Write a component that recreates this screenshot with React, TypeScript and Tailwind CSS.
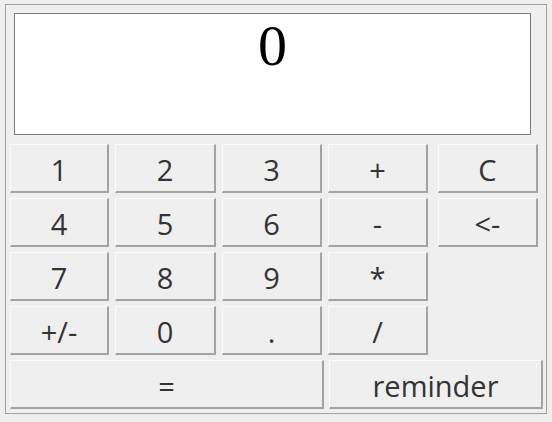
import type { ReactNode } from 'react'

const keyBase =
  'flex h-[49px] items-center justify-center border-t border-l border-t-[#fbfbfb] border-l-[#fbfbfb] border-r-2 border-b-2 border-r-[#a3a3a3] border-b-[#a3a3a3] bg-[#efefef] pt-[2px] text-[29px] leading-none text-[#333333]'

function Key({ children, className = '' }: { children: ReactNode; className?: string }) {
  return <button className={`${keyBase} ${className}`}>{children}</button>
}

const rows: (string | null)[][] = [
  ['1', '2', '3', '+', 'C'],
  ['4', '5', '6', '-', '<-'],
  ['7', '8', '9', '*', null],
  ['+/-', '0', '.', '/', null],
]

export default function App() {
  return (
    <div
      className="h-[422px] w-[552px] bg-[#efefef] pl-[5px] pt-[4px]"
      style={{ fontFamily: '"Open Sans", "Noto Sans", sans-serif' }}
    >
      <div className="h-[410px] w-[542px] border border-[#a0a0a0] pl-[4px] pt-[8px]">
        {/* display */}
        <div className="ml-[4px] flex h-[122px] w-[517px] justify-center border border-[#7c7c7c] bg-white pt-[3px]">
          <span
            className="text-[58px] leading-none text-black"
            style={{ fontFamily: '"Liberation Serif", serif' }}
          >
            0
          </span>
        </div>

        {/* keypad */}
        <div className="mt-[9px] grid grid-cols-[99px_101px_100px_100px_104px] gap-x-[6px] gap-y-[5px]">
          {rows.flatMap((row, r) =>
            row.map((label, c) =>
              label === null ? (
                <div key={`${r}-${c}`} />
              ) : (
                <Key key={`${r}-${c}`} className={c === 4 ? 'ml-[4px] w-[100px]' : ''}>
                  {label}
                </Key>
              ),
            ),
          )}
        </div>
        <div className="mt-[5px] flex gap-[5px]">
          <Key className="w-[314px]">=</Key>
          <Key className="w-[214px]">reminder</Key>
        </div>
      </div>
    </div>
  )
}
